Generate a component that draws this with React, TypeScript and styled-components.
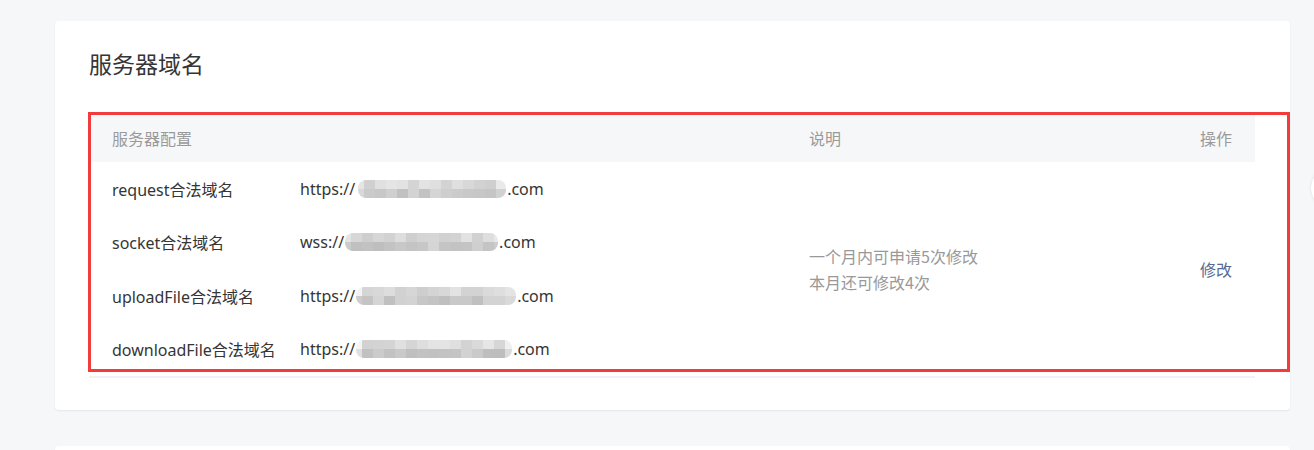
import React from "react";
import styled, { createGlobalStyle } from "styled-components";

const Global = createGlobalStyle`
  html, body { margin: 0; padding: 0; background: #f6f7f9; }
  body { font-family: "Noto Sans", "Noto Sans CJK SC", sans-serif; color: #353535; }
  * { box-sizing: border-box; }
`;

const Page = styled.div`
  padding: 21px 24px 0 55px;
  display: flex;
  flex-direction: column;
  gap: 36px;
  height: 450px;
  overflow: hidden;
  position: relative;
`;

const Card = styled.section`
  background: #fff;
  border-radius: 4px;
  box-shadow: 0 1px 2px rgba(0, 0, 0, 0.07);
  padding: 26px 35px 32px 34px;
  flex-shrink: 0;
`;

const EmptyCard = styled(Card)`
  height: 80px;
`;

const Title = styled.h2`
  margin: 0 0 35px;
  font-size: 23px;
  line-height: 32px;
  font-weight: 400;
  color: #353535;
  font-family: "Noto Sans CJK SC", sans-serif;
`;

const TableWrap = styled.div`
  position: relative;
`;

const Grid = styled.div`
  display: grid;
  grid-template-columns: 697px 1fr 140px;
  border-bottom: 2px solid #f1f2f4;
`;

const HeadCell = styled.div<{ $right?: boolean }>`
  background: #f6f7f9;
  height: 48px;
  padding: 0 23px;
  display: flex;
  align-items: center;
  justify-content: ${(p) => (p.$right ? "flex-end" : "flex-start")};
  font-size: 16px;
  color: #9a9a9a;
  font-family: "Noto Sans CJK SC", sans-serif;
`;

const BodyCell = styled.div<{ $right?: boolean }>`
  height: 214px;
  padding: 0 23px;
  display: flex;
  flex-direction: column;
  justify-content: center;
  align-items: ${(p) => (p.$right ? "flex-end" : "flex-start")};
`;

const ConfigList = styled.div`
  height: 214px;
  padding-left: 23px;
  display: flex;
  flex-direction: column;
`;

const ConfigRow = styled.div`
  flex: 1;
  display: flex;
  align-items: center;
  font-size: 16px;
  color: #353535;
`;

const Label = styled.span`
  width: 188px;
  flex-shrink: 0;
  white-space: nowrap;
`;

const Url = styled.span`
  display: inline-flex;
  align-items: center;
  white-space: nowrap;
`;

const Desc = styled.div`
  font-size: 16px;
  line-height: 26px;
  color: #999;
  font-family: "Noto Sans CJK SC", sans-serif;
`;

const Link = styled.a`
  font-size: 16px;
  color: #576b95;
  text-decoration: none;
  font-family: "Noto Sans CJK SC", sans-serif;
  cursor: pointer;
`;

const Annotation = styled.div`
  position: absolute;
  left: -1px;
  top: -2px;
  right: -35px;
  height: 260px;
  border: 3px solid #f23b3b;
  pointer-events: none;
`;

const SideButton = styled.div`
  position: absolute;
  left: 1311px;
  top: 168px;
  width: 40px;
  height: 40px;
  border-radius: 50%;
  background: #fff;
  box-shadow: 0 0 3px rgba(0, 0, 0, 0.12);
`;

const MosaicSvg = styled.svg`
  display: block;
  flex-shrink: 0;
`;

function Mosaic({ width, seed, offset = 0 }: { width: number; seed: number; offset?: number }) {
  const tile = 11;
  const cols = Math.ceil(width / tile) + 1;
  const tones: string[][] = [[], []];
  let s = seed;
  const rnd = () => {
    s = (s * 9301 + 49297) % 233280;
    return s / 233280;
  };
  for (let r = 0; r < 2; r++) {
    for (let c = 0; c < cols; c++) {
      const base = r === 0 ? 232 : 214;
      const v = Math.round(base - rnd() * 26 + (c < 1 || c >= cols - 2 ? 14 : 0));
      tones[r].push(`rgb(${v},${v},${v})`);
    }
  }
  const id = `m${seed}`;
  return (
    <MosaicSvg width={width} height={20} viewBox={`0 0 ${width} 20`} style={{ marginLeft: offset }}>
      <defs>
        <filter id={`${id}f`} x="-5%" y="-20%" width="110%" height="140%">
          <feGaussianBlur stdDeviation="0.5" />
        </filter>
        <clipPath id={`${id}c`}>
          <rect x="1" y="1" width={width - 2} height="18" rx="8" ry="8" />
        </clipPath>
      </defs>
      <g clipPath={`url(#${id}c)`} filter={`url(#${id}f)`}>
        {tones.map((row, r) =>
          row.map((col, c) => (
            <rect key={`${r}-${c}`} x={c * tile - 4} y={1 + r * 9} width={tile} height={9} fill={col} />
          ))
        )}
      </g>
    </MosaicSvg>
  );
}

const rows = [
  { label: "request合法域名", scheme: "https://", w: 150, seed: 11, off: 2 },
  { label: "socket合法域名", scheme: "wss://", w: 155, seed: 37, off: 0 },
  { label: "uploadFile合法域名", scheme: "https://", w: 162, seed: 73, off: 0 },
  { label: "downloadFile合法域名", scheme: "https://", w: 158, seed: 121, off: 0 },
];

export default function App() {
  return (
    <>
      <Global />
      <Page>
        <Card>
          <Title>服务器域名</Title>
          <TableWrap>
            <Grid>
              <HeadCell>服务器配置</HeadCell>
              <HeadCell>说明</HeadCell>
              <HeadCell $right>操作</HeadCell>
              <ConfigList>
                {rows.map((r) => (
                  <ConfigRow key={r.label}>
                    <Label>{r.label}</Label>
                    <Url>
                      {r.scheme}
                      <Mosaic width={r.w} seed={r.seed} offset={r.off} />
                      .com
                    </Url>
                  </ConfigRow>
                ))}
              </ConfigList>
              <BodyCell>
                <Desc>
                  一个月内可申请5次修改
                  <br />
                  本月还可修改4次
                </Desc>
              </BodyCell>
              <BodyCell $right>
                <Link>修改</Link>
              </BodyCell>
            </Grid>
            <Annotation />
          </TableWrap>
        </Card>
        <EmptyCard />
        <SideButton />
      </Page>
    </>
  );
}
